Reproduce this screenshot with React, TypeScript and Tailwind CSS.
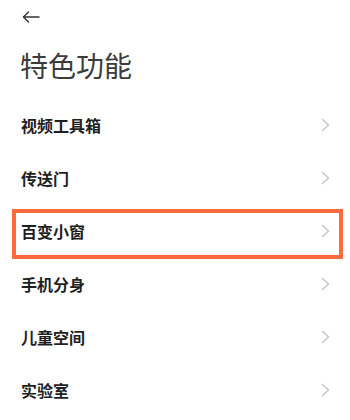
const ITEMS = ["视频工具箱", "传送门", "百变小窗", "手机分身", "儿童空间", "实验室"];

function BackArrow() {
  return (
    <svg width="18" height="12" viewBox="0 0 18 12" fill="none" stroke="#333" strokeWidth="1.4" strokeLinecap="round" strokeLinejoin="round">
      <path d="M1.5 6H17" />
      <path d="M6.5 1L1.5 6l5 5" />
    </svg>
  );
}

function Chevron() {
  return (
    <svg width="9" height="14" viewBox="0 0 9 14" fill="none" stroke="#c4c4c4" strokeWidth="1.4" strokeLinecap="round" strokeLinejoin="round">
      <path d="M1.5 1.5L7.5 7l-6 5.5" />
    </svg>
  );
}

export default function App() {
  return (
    <div
      className="relative h-[420px] w-[350px] overflow-hidden bg-white"
      style={{ fontFamily: '"Noto Sans CJK SC", "Noto Sans", sans-serif' }}
    >
      <div className="flex h-[34px] items-center pl-[22px]">
        <BackArrow />
      </div>
      <h1 className="mt-[17px] mb-[19px] pl-[20px] text-[28px] leading-[28px] font-normal text-[#3c3c3c]">
        特色功能
      </h1>
      <ul>
        {ITEMS.map((item, i) => (
          <li key={item} className="relative flex h-[53px] items-center justify-between pl-[21px] pr-[20px]">
            <span className="text-[16px] font-bold text-[#1f1f1f]">{item}</span>
            <Chevron />
            {i === 2 ? (
              <div className="pointer-events-none absolute top-[5px] left-[12px] h-[50px] w-[331px] border-4 border-[#ff6b3d]" />
            ) : null}
          </li>
        ))}
      </ul>
    </div>
  );
}
